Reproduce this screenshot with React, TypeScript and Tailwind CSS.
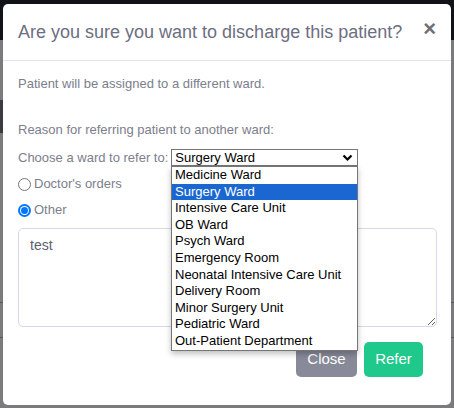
import React from "react";

const options = [
  "Medicine Ward",
  "Surgery Ward",
  "Intensive Care Unit",
  "OB Ward",
  "Psych Ward",
  "Emergency Room",
  "Neonatal Intensive Care Unit",
  "Delivery Room",
  "Minor Surgery Unit",
  "Pediatric Ward",
  "Out-Patient Department",
];

export default function App() {
  return (
    <div
      className="relative w-[454px] h-[408px] overflow-hidden bg-[#7b7b7e]"
      style={{ fontFamily: '"Liberation Sans", Arial, sans-serif' }}
    >
      {/* backdrop page */}
      <div className="flex flex-col w-full h-full">
        <div className="h-[40px] bg-[#121319]" />
        <div className="h-[60px] bg-[#7b7b7e]" />
        <div className="h-[33px] flex">
          <div className="w-[40px] bg-[#3b3b40]" />
          <div className="flex-1 bg-[#7b7b7e]" />
        </div>
        <div className="h-[170px] bg-[#7b7b7e] border-b border-[#5a5a5e]" />
        <div className="h-[35px] bg-[#7b7b7e] border-b border-[#5a5a5e]" />
        <div className="flex-1 bg-[#7b7b7e]" />
      </div>

      {/* modal */}
      <div className="absolute left-[3px] top-[4px] w-[448px] h-[401px] bg-white rounded-[5px] flex flex-col">
        <div className="h-[57px] flex items-center justify-between pl-[15px] pr-[15px] border-b border-[#e2e2f0]">
          <div className="text-[18px] text-[#6d6e82] leading-none whitespace-nowrap -mt-[1px]">
            Are you sure you want to discharge this patient?
          </div>
          <div className="text-[22px] font-bold text-[#6f6f76] leading-none -mt-[6px]">×</div>
        </div>
        <div className="pl-[15px] pr-[14px] pt-[15px] text-[13px] text-[#7c7e8c] leading-[16px] relative">
          <div>Patient will be assigned to a different ward.</div>
          <div className="mt-[30px]">Reason for referring patient to another ward:</div>
          <div className="mt-[11px] flex items-center h-[17px]">
            <span>Choose a ward to refer to:</span>
            <div className="ml-[3px] w-[187px] h-[17px] border border-[#767676] flex items-center justify-between pl-[3px] pr-[4px] text-[13px] text-black bg-white">
              <span className="leading-none">Surgery Ward</span>
              <svg width="11" height="8" viewBox="0 0 11 8">
                <path d="M1.5 1.5 L5.5 5.5 L9.5 1.5" fill="none" stroke="#000" strokeWidth="2.2" />
              </svg>
            </div>
          </div>
          <div className="mt-[10px] flex items-center h-[16px]">
            <span className="w-[13px] h-[13px] rounded-full border border-[#767676] bg-white" />
            <span className="ml-[3px]">Doctor's orders</span>
          </div>
          <div className="mt-[10px] flex items-center h-[16px]">
            <span className="w-[13px] h-[13px] rounded-full bg-[#0075ff] flex items-center justify-center">
              <span className="w-[9px] h-[9px] rounded-full bg-white flex items-center justify-center">
                <span className="w-[7px] h-[7px] rounded-full bg-[#0075ff]" />
              </span>
            </span>
            <span className="ml-[3px]">Other</span>
          </div>
          <textarea
            className="mt-[10px] block w-[419px] h-[99px] border border-[#d8d8ec] rounded-[5px] px-[11px] py-[6px] text-[14px] leading-[20px] text-[#5e6070] outline-none"
            defaultValue="test"
          />
        </div>
        <div className="flex justify-end gap-[7px] pr-[28px] mt-[15px]">
          <button className="w-[61px] h-[35px] rounded-[5px] bg-[#888a99] text-white text-[15px]">
            Close
          </button>
          <button className="w-[59px] h-[35px] rounded-[5px] bg-[#1fc98b] text-white text-[15px]">
            Refer
          </button>
        </div>

        {/* open dropdown list */}
        <div className="absolute left-[168px] top-[162px] w-[187px] bg-white border border-[#767676] shadow-[0_3px_6px_rgba(0,0,0,0.25)] text-[13px] text-black">
          {options.map((o) => (
            <div
              key={o}
              className={
                "h-[16.6px] leading-[16.6px] pl-[3px] whitespace-nowrap " +
                (o === "Surgery Ward" ? "bg-[#1a67d2] text-white" : "")
              }
            >
              {o}
            </div>
          ))}
        </div>
      </div>
    </div>
  );
}
